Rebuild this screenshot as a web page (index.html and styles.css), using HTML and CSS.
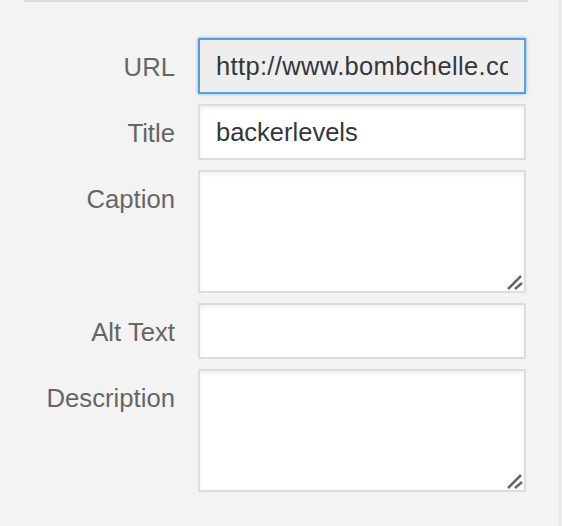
FILE: index.html
```html
<!DOCTYPE html>
<html lang="en">
<head>
<meta charset="utf-8">
<title>Attachment Details</title>
<link rel="stylesheet" href="styles.css">
</head>
<body>
<div class="panel">
  <div class="divider"></div>
  <div class="settings">
    <label class="name" for="f-url">URL</label>
    <input id="f-url" class="field field-readonly" type="text" value="http://www.bombchelle.com/wp-content/uploads/backerlevels.png" readonly>

    <label class="name" for="f-title">Title</label>
    <input id="f-title" class="field" type="text" value="backerlevels">

    <label class="name" for="f-caption">Caption</label>
    <div class="area-wrap">
      <textarea id="f-caption" class="area"></textarea>
      <svg class="grip" width="24" height="24" viewBox="0 0 24 24" aria-hidden="true"><path d="M6 20 L19 7 M13 20 L20 14" stroke="#666666" stroke-width="2.5" stroke-linecap="butt" fill="none"/></svg>
    </div>

    <label class="name" for="f-alt">Alt Text</label>
    <input id="f-alt" class="field" type="text" value="">

    <label class="name" for="f-desc">Description</label>
    <div class="area-wrap">
      <textarea id="f-desc" class="area"></textarea>
      <svg class="grip" width="24" height="24" viewBox="0 0 24 24" aria-hidden="true"><path d="M6 20 L19 7 M13 20 L20 14" stroke="#666666" stroke-width="2.5" stroke-linecap="butt" fill="none"/></svg>
    </div>
  </div>
</div>
</body>
</html>
```
FILE: styles.css
```css
html, body {
  margin: 0;
  padding: 0;
  background: #f3f3f3;
}

body {
  font-family: "Liberation Sans", Arial, sans-serif;
}

.panel {
  width: 561px;
  height: 526px;
  box-sizing: border-box;
  border-right: 2px solid #e6e6e6;
}

.divider {
  margin-left: 24px;
  width: 504px;
  height: 2px;
  background: #dcdcdc;
}

.settings {
  display: grid;
  grid-template-columns: 175px 328px;
  column-gap: 23px;
  row-gap: 10px;
  align-items: start;
  padding-top: 36px;
}

.name {
  font-size: 25.7px;
  line-height: 30px;
  padding-top: 14px;
  color: #666666;
  text-align: right;
}

.field {
  display: block;
  width: 328px;
  height: 56px;
  box-sizing: border-box;
  margin: 0;
  padding: 0 16px;
  border: 2px solid #dddddd;
  border-radius: 0;
  background: #ffffff;
  box-shadow: inset 0 2px 4px rgba(0, 0, 0, 0.07);
  font-family: "Liberation Sans", Arial, sans-serif;
  font-size: 25.5px;
  color: #32373c;
  outline: none;
}

.field-readonly {
  background: #eeeeee;
  border-color: #5b9dd9;
  box-shadow: 0 0 3px rgba(30, 140, 190, 0.6);
  letter-spacing: 0.35px;
}

.area-wrap {
  position: relative;
  width: 328px;
  height: 123px;
}

.area {
  display: block;
  width: 328px;
  height: 123px;
  box-sizing: border-box;
  margin: 0;
  padding: 8px 16px;
  border: 2px solid #dddddd;
  border-radius: 0;
  background: #ffffff;
  box-shadow: inset 0 2px 4px rgba(0, 0, 0, 0.07);
  resize: none;
  outline: none;
  font-family: "Liberation Sans", Arial, sans-serif;
  font-size: 25px;
  color: #32373c;
}

.grip {
  position: absolute;
  right: 0;
  bottom: 0;
  display: block;
}
```
